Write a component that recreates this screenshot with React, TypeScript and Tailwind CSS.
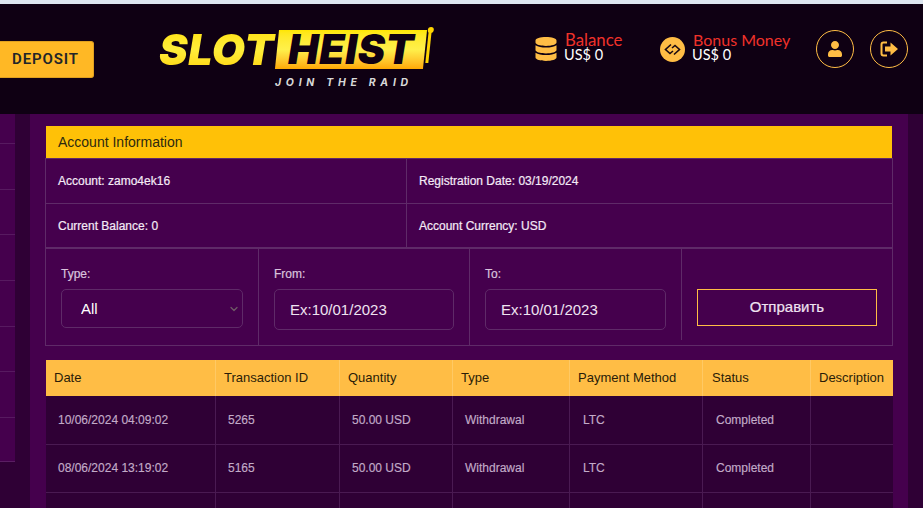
import React from 'react';
import { ChevronDown } from 'lucide-react';
import { FaDatabase, FaUser } from 'react-icons/fa';

const rows = [
  { date: '10/06/2024 04:09:02', id: '5265' },
  { date: '08/06/2024 13:19:02', id: '5165' },
];

const headers = [
  { label: 'Date', className: 'pl-[8px]' },
  { label: 'Transaction ID', className: 'pl-[8px]' },
  { label: 'Quantity', className: 'pl-[8px]' },
  { label: 'Type', className: 'pl-[8px]' },
  { label: 'Payment Method', className: 'pl-[8px]' },
  { label: 'Status', className: 'pl-[9px]' },
  { label: 'Description', className: 'pl-[8px]' },
];

const cellPad = ['pl-[12px]', 'pl-[12px]', 'pl-[12px]', 'pl-[12px]', 'pl-[13px]', 'pl-[13px]', 'pl-[13px]'];

const colsClass = 'grid grid-cols-[170px_124px_113px_117px_133px_108px_81px]';

const SideRows = () => (
  <div className="w-[15px] shrink-0">
    <div className="h-[348px] bg-[#45004d] pt-[29px] border-b border-[#5a1e63]">
      {[0, 1, 2, 3, 4, 5, 6].map((i) => (
        <div key={i} className="h-[45.700px] border-t border-[#571a60]" />
      ))}
    </div>
  </div>
);

const LogoutIcon = () => (
  <svg width="19" height="16" viewBox="0 0 19 16" fill="none">
    <path d="M7 1.5H3.5Q1.5 1.5 1.5 3.5V12.5Q1.5 14.500 3.500 14.500H7" stroke="#ffbd45" strokeWidth="2" />
    <path d="M5 5.500H10.500V1.500L18 8L10.500 14.500V10.500H5Z" fill="#ffbd45" />
  </svg>
);

const BonusIcon = () => (
  <div className="w-[25px] h-[25px] rounded-full bg-[#ffbd45] flex items-center justify-center">
    <svg width="17" height="13" viewBox="0 0 17 13" fill="none" stroke="#1a0a12" strokeWidth="1.600">
      <path d="M7 1.500L1.500 6.500L6 10.500L9 8" />
      <path d="M10 11.500L15.500 6.500L11 2.500L8 5" />
    </svg>
  </div>
);

const Logo = () => (
  <div className="ml-[65px] w-[272px] shrink-0 font-['Inter',sans-serif]">
    <div className="flex items-center h-[40px]">
      <span className="w-[118px] text-[43px] leading-none font-black italic tracking-[0.500px] bg-gradient-to-b from-[#ffe000] via-[#ffee3a] to-[#ffd500] bg-clip-text text-transparent">
        SLOT
      </span>
      <div className="h-[39px] w-[148px] flex items-center justify-center -skew-x-6 bg-gradient-to-b from-[#ffe600] via-[#fff04a] to-[#ffa800]">
        <span className="skew-x-6 text-[41px] leading-none font-black italic tracking-[0.500px] text-[#0f0013]">HEIST</span>
      </div>
      <div className="relative h-[32px] w-[3px] ml-[2px] mt-[-4px] bg-[#ffd500] skew-x-[-6deg]">
        <div className="absolute -top-[4px] -left-[1px] w-[6px] h-[6px] rounded-full bg-[#ffd500]" />
      </div>
    </div>
    <div className="mt-[7px] pl-[116px] text-[10.500px] leading-[14px] font-bold italic tracking-[4.700px] text-[#d8d8d8] whitespace-nowrap">
      JOIN THE RAID
    </div>
  </div>
);

const Stat = ({ icon, label, className, iconClass, labelClass }: { icon: React.ReactNode; label: string; className: string; iconClass: string; labelClass: string }) => (
  <div className={`flex ${className}`}>
    <div className={`${iconClass} pt-[7px]`}>{icon}</div>
    <div className="font-['Lato',sans-serif] pt-[1px]">
      <div className={`${labelClass} leading-[17px] text-[#f0322a]`}>{label}</div>
      <div className="text-[14.500px] leading-[14px] text-white -ml-[1px]">US$ 0</div>
    </div>
  </div>
);

const Header = () => (
  <header className="h-[110px] bg-[#0f0013] flex items-start shrink-0">
    <button className="mt-[37px] w-[94px] h-[37px] pr-[2px] rounded-r-[3px] bg-[#ffb825] border border-[#e0a020] border-l-0 text-[#212529] text-[15px] font-semibold tracking-[0.900px] font-['Roboto',sans-serif]">
      DEPOSIT
    </button>
    <div className="mt-[25px]">
      <Logo />
    </div>
    <div className="mt-[26px] ml-[103px] flex">
      <Stat icon={<FaDatabase className="text-[#ffbd45]" size={24} />} iconClass="w-[31px]" labelClass="text-[16.800px]" label="Balance" className="w-[126px] h-[35px]" />
      <Stat icon={<BonusIcon />} iconClass="w-[33px]" labelClass="text-[16px]" label="Bonus Money" className="w-[156px] h-[35px]" />
    </div>
    <div className="mt-[26px] flex gap-[16px]">
      <div className="w-[38px] h-[38px] rounded-full border border-[#ffbd45] flex items-center justify-center">
        <FaUser className="text-[#ffbd45]" size={16} />
      </div>
      <div className="w-[38px] h-[38px] rounded-full border border-[#ffbd45] flex items-center justify-center">
        <LogoutIcon />
      </div>
    </div>
  </header>
);

const InfoCell = ({ children, className = '' }: { children: React.ReactNode; className?: string }) => (
  <div className={`h-[45px] flex items-center pl-[12px] text-[12px] text-[#f4eaf6] [-webkit-text-stroke:0.200px_#f4eaf6] border-[#5f2a68] ${className}`}>
    {children}
  </div>
);

const AccountInfo = () => (
  <section className="w-[848px] ml-[15px] mt-[12px]">
    <div className="h-[32px] ml-[1px] w-[846px] bg-[#ffc107] flex items-center pl-[12px] text-[14px] text-[#2c2a10]">
      Account Information
    </div>
    <div className="border-x border-t border-[#5f2a68] grid grid-cols-[361px_1fr]">
      <InfoCell className="border-r border-b">Account: zamo4ek16</InfoCell>
      <InfoCell className="border-b">Registration Date: 03/19/2024</InfoCell>
      <InfoCell className="border-r border-b-2">Current Balance: 0</InfoCell>
      <InfoCell className="border-b-2">Account Currency: USD</InfoCell>
    </div>
  </section>
);

const FieldLabel = ({ children }: { children: React.ReactNode }) => (
  <div className="text-[12px] leading-[14px] text-[#d9c3dd] [-webkit-text-stroke:0.200px_#d9c3dd] mb-[8px]">{children}</div>
);

const dateInputClass =
  "h-[41px] rounded-[5px] border border-[#5f2a68] bg-transparent pl-[15px] text-[15px] text-white placeholder:text-[#efe3f1] outline-none";

const Filters = () => (
  <section className="w-[848px] ml-[15px] h-[97px] border-x border-b border-[#5f2a68] grid grid-cols-[213px_211px_211px_1fr]">
    <div className="border-r border-[#5f2a68] pl-[15px] pt-[18px]">
      <FieldLabel>Type:</FieldLabel>
      <div className="relative w-[182px]">
        <select className="w-full h-[39px] appearance-none rounded-[5px] border border-[#5f2a68] bg-transparent pl-[19px] pt-[1px] text-[15px] text-white outline-none">
          <option className="text-black">All</option>
        </select>
        <ChevronDown className="absolute right-[3px] top-[14px] text-[#6f5a66]" size={12} strokeWidth={2.500} />
      </div>
    </div>
    <div className="border-r border-[#5f2a68] pl-[15px] pt-[18px]">
      <FieldLabel>From:</FieldLabel>
      <input className={`${dateInputClass} w-[180px]`} placeholder="Ex:10/01/2023" />
    </div>
    <div className="pl-[15px] pt-[18px]">
      <FieldLabel>To:</FieldLabel>
      <input className={`${dateInputClass} w-[181px]`} placeholder="Ex:10/01/2023" />
    </div>
    <div className="h-[91px] border-l border-[#5f2a68] pl-[15px] pt-[40px]">
      <button className="w-[180px] h-[37px] border border-[#ffbd45] text-[15px] text-[#efe3f1] [-webkit-text-stroke:0.200px_#efe3f1]">
        Отправить
      </button>
    </div>
  </section>
);

const Transactions = () => (
  <section className="w-[847px] ml-[16px] mt-[14px]">
    <div className={`${colsClass} h-[36px] bg-[#ffbd45]`}>
      {headers.map((h, i) => (
        <div
          key={h.label}
          className={`flex items-center text-[13px] text-[#2a1c08] whitespace-nowrap ${h.className} ${i < 6 ? 'border-r border-[#ffc964]' : ''}`}
        >
          {h.label}
        </div>
      ))}
    </div>
    {[...rows, null].map((row, r) => (
      <div key={r} className={`${colsClass} ${r === 0 ? 'h-[49px]' : 'h-[48px]'} bg-[#2f0035] border-b border-[#4a1a52]`}>
        {row ? (
          [row.date, row.id, '50.00 USD', 'Withdrawal', 'LTC', 'Completed', ''].map((v, i) => (
            <div
              key={i}
              className={`flex items-center pb-[1px] ${cellPad[i]} text-[12px] text-[#c2abc8] [-webkit-text-stroke:0.150px_#c2abc8] whitespace-nowrap ${i < 6 ? 'border-r border-[#4a1a52]' : ''}`}
            >
              {v}
            </div>
          ))
        ) : (
          [0, 1, 2, 3, 4, 5, 6].map((i) => (
            <div key={i} className={i < 6 ? 'border-r border-[#4a1a52]' : ''} />
          ))
        )}
      </div>
    ))}
  </section>
);

export default function App() {
  return (
    <div className="h-[508px] w-[923px] overflow-hidden flex flex-col bg-[#2f0035] font-['Liberation_Sans',sans-serif]">
      <div className="h-[4px] bg-[#dde6f0] shrink-0" />
      <Header />
      <div className="flex flex-1 min-h-0">
        <SideRows />
        <div className="w-[15px] shrink-0" />
        <main className="w-[878px] bg-[#45004d]">
          <AccountInfo />
          <Filters />
          <Transactions />
        </main>
      </div>
    </div>
  );
}
